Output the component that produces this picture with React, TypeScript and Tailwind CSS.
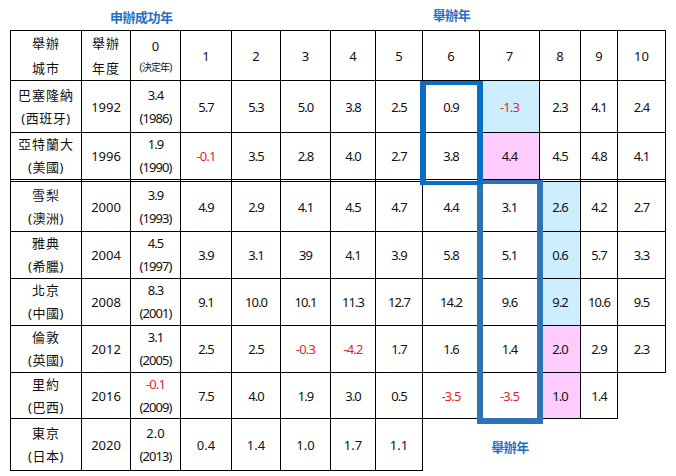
import React from "react";

type Row = {
  city: string;
  country: string;
  year: string;
  v0: string;
  y0: string;
  vals: string[];
  tight: boolean;
};

const rows: Row[] = [
  { city: "巴塞隆納", country: "(西班牙)", year: "1992", v0: "3.4", y0: "(1986)", vals: ["5.7", "5.3", "5.0", "3.8", "2.5", "0.9", "-1.3", "2.3", "4.1", "2.4"], tight: true },
  { city: "亞特蘭大", country: "(美國)", year: "1996", v0: "1.9", y0: "(1990)", vals: ["-0.1", "3.5", "2.8", "4.0", "2.7", "3.8", "4.4", "4.5", "4.8", "4.1"], tight: true },
  { city: "雪梨", country: "(澳洲)", year: "2000", v0: "3.9", y0: "(1993)", vals: ["4.9", "2.9", "4.1", "4.5", "4.7", "4.4", "3.1", "2.6", "4.2", "2.7"], tight: true },
  { city: "雅典", country: "(希臘)", year: "2004", v0: "4.5", y0: "(1997)", vals: ["3.9", "3.1", "39", "4.1", "3.9", "5.8", "5.1", "0.6", "5.7", "3.3"], tight: true },
  { city: "北京", country: "(中國)", year: "2008", v0: "8.3", y0: "(2001)", vals: ["9.1", "10.0", "10.1", "11.3", "12.7", "14.2", "9.6", "9.2", "10.6", "9.5"], tight: true },
  { city: "倫敦", country: "(英國)", year: "2012", v0: "3.1", y0: "(2005)", vals: ["2.5", "2.5", "-0.3", "-4.2", "1.7", "1.6", "1.4", "2.0", "2.9", "2.3"], tight: true },
  { city: "里約", country: "(巴西)", year: "2016", v0: "-0.1", y0: "(2009)", vals: ["7.5", "4.0", "1.9", "3.0", "0.5", "-3.5", "-3.5", "1.0", "1.4"], tight: true },
  { city: "東京", country: "(日本)", year: "2020", v0: "2.0", y0: "(2013)", vals: ["0.4", "1.4", "1.0", "1.7", "1.1"], tight: false },
];

// highlight map: [rowIndex][valIndex] -> bg class
const hl: Record<string, string> = {
  "0-6": "bg-[#cdeeff]",
  "1-6": "bg-[#ffccff]",
  "2-7": "bg-[#cdeeff]",
  "3-7": "bg-[#cdeeff]",
  "4-7": "bg-[#cdeeff]",
  "5-7": "bg-[#ffccff]",
  "6-7": "bg-[#ffccff]",
};

const font = "font-['Noto_Sans','Noto_Sans_CJK_TC',sans-serif]";

function Cell({
  children,
  first,
  top,
  dbl,
  bg,
}: {
  children?: React.ReactNode;
  first?: boolean;
  top?: boolean;
  dbl?: boolean;
  bg?: string;
}) {
  return (
    <div
      className={[
        "flex flex-col items-center justify-center border-r border-b border-[#000] text-[13px] text-[#111]",
        first ? "border-l" : "",
        top ? "border-t" : "",
        dbl ? "border-b-[3px] border-double" : "",
        bg || "bg-white",
      ].join(" ")}
    >
      {children}
    </div>
  );
}

function Num({ v, tight }: { v: string; tight: boolean }) {
  const neg = v.startsWith("-");
  return (
    <span
      className={[
        "leading-[18px]",
        tight ? "tracking-[-0.9px]" : "tracking-[0px]",
        neg ? "text-[#e3262e]" : "text-[#111]",
      ].join(" ")}
    >
      {v}
    </span>
  );
}

export default function App() {
  const headers = ["1", "2", "3", "4", "5", "6", "7", "8", "9", "10"];
  return (
    <div className={`relative w-[676px] h-[476px] bg-white ${font}`}>
      {/* titles */}
      <div className="ml-[10px] grid h-[30px] grid-cols-[72px_49px_50px_51px_49px_50px_45px_47px_57px_60px_41px_37px_48px]">
        <div className="col-start-2 col-span-3 pl-[28px] pt-[8px] text-[13px] leading-[18px] font-bold text-[#1f6fc5] tracking-[-0.5px]">
          申辦成功年
        </div>
        <div className="col-start-9 flex justify-center pt-[6px] text-[13px] leading-[18px] font-bold text-[#1f6fc5] tracking-[-0.5px]">
          舉辦年
        </div>
      </div>

      {/* table */}
      <div className="ml-[10px] grid grid-cols-[72px_49px_50px_51px_49px_50px_45px_47px_57px_60px_41px_37px_48px] grid-rows-[51px_52px_49px_50px_47px_47px_47px_46px_52px]">
        {/* header */}
        <Cell first top>
          <span className="leading-[25px] tracking-[1px]">舉辦</span>
          <span className="leading-[25px] tracking-[1px]">城市</span>
        </Cell>
        <Cell top>
          <span className="leading-[25px] tracking-[1px]">舉辦</span>
          <span className="leading-[25px] tracking-[1px]">年度</span>
        </Cell>
        <Cell top>
          <span className="leading-[22px]">0</span>
          <span className="text-[10px] leading-[20px] tracking-[-0.8px]">(決定年)</span>
        </Cell>
        {headers.map((h) => (
          <Cell key={h} top>
            <span className="leading-[18px]">{h}</span>
          </Cell>
        ))}

        {rows.map((r, ri) => {
          const dbl = ri === 1;
          const cells: React.ReactNode[] = [];
          cells.push(
            <Cell key="c" first dbl={dbl}>
              <span className="leading-[23px] tracking-[1px]">{r.city}</span>
              <span className="leading-[23px] tracking-[0.5px]">{r.country}</span>
            </Cell>
          );
          cells.push(
            <Cell key="y" dbl={dbl}>
              <span className="leading-[18px]">{r.year}</span>
            </Cell>
          );
          cells.push(
            <Cell key="z" dbl={dbl}>
              <span className={`leading-[23px] ${r.v0.startsWith("-") ? "text-[#e3262e]" : ""} ${r.tight ? "tracking-[-0.9px]" : ""}`}>{r.v0}</span>
              <span className="leading-[23px] tracking-[-0.9px]">{r.y0}</span>
            </Cell>
          );
          for (let i = 0; i < 10; i++) {
            const v = r.vals[i];
            if (v === undefined) {
              if (ri === 7 && i === 6) {
                cells.push(
                  <div key={i} className="flex items-center justify-center pt-[3px] text-[13px] leading-[18px] font-bold text-[#1f6fc5] tracking-[-0.5px]">
                    舉辦年
                  </div>
                );
              } else {
                cells.push(<div key={i} />);
              }
            } else {
              cells.push(
                <Cell key={i} dbl={dbl} bg={hl[`${ri}-${i}`]}>
                  <Num v={v} tight={r.tight} />
                </Cell>
              );
            }
          }
          return <React.Fragment key={ri}>{cells}</React.Fragment>;
        })}
      </div>

      {/* highlight frames overlay */}
      <div className="pointer-events-none absolute left-[477px] top-[180px] h-[244px] w-[66px] border-x-[6px] border-t-[4px] border-b-[6px] border-[#2e74b5]" />
      <div className="pointer-events-none absolute left-[420px] top-[81px] h-[104px] w-[63px] border-x-[6px] border-y-[4px] border-[#0a6fc2]" />
    </div>
  );
}
